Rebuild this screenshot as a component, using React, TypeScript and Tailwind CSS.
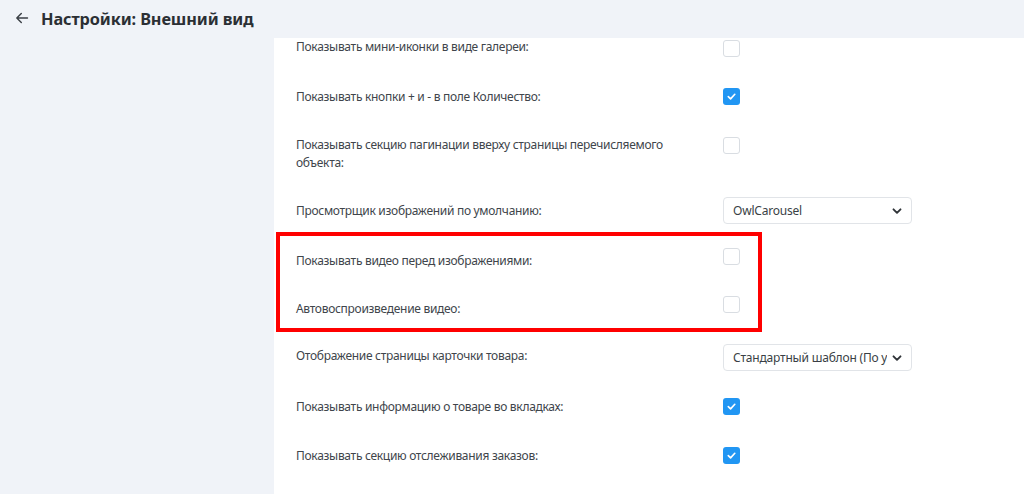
import React from "react";

const font = { fontFamily: '"Noto Sans", "Open Sans", Arial, sans-serif' };

function Check({ checked }: { checked?: boolean }) {
  if (checked) {
    return (
      <div className="w-[17px] h-[17px] rounded-[3px] bg-[#2196f3] flex items-center justify-center">
        <svg width="11" height="11" viewBox="0 0 12 12" fill="none">
          <path d="M2.5 6.2 L5 8.6 L9.6 3.6" stroke="white" strokeWidth="1.8" strokeLinecap="round" strokeLinejoin="round" />
        </svg>
      </div>
    );
  }
  return <div className="w-[17px] h-[17px] rounded-[3px] border border-[#d9dde2] bg-white" />;
}

function Select({ value }: { value: string }) {
  return (
    <div className="w-[189px] h-[27px] rounded-[4px] border border-[#e1e4e8] bg-white flex items-center pl-[9px] pr-[8px]">
      <span className="flex-1 overflow-hidden whitespace-nowrap text-[12px] tracking-[-0.2px] text-[#3a3f45] mr-[4px]">{value}</span>
      <svg width="12" height="12" viewBox="0 0 12 12" fill="none">
        <path d="M2.5 4.3 L6 7.8 L9.5 4.3" stroke="#2f3338" strokeWidth="1.9" strokeLinecap="round" strokeLinejoin="round" />
      </svg>
    </div>
  );
}

function Row({ label, h, cOff, children }: { label: React.ReactNode; h: string; cOff: string; children: React.ReactNode }) {
  return (
    <div className={`flex ${h}`}>
      <div className="w-[400px] text-[12px] tracking-[-0.3px] leading-[18px] text-[#40454b]">{label}</div>
      <div className={`ml-[27px] ${cOff}`}>{children}</div>
    </div>
  );
}

export default function App() {
  return (
    <div className="w-[1024px] h-[494px] bg-[#f0f3f8] overflow-hidden" style={font}>
      <div className="h-[38px] flex items-center pl-[15px]">
        <svg width="14" height="14" viewBox="0 0 14 14" fill="none" className="mr-[12px] mt-[-2px]">
          <path d="M12.5 7 H1.8 M6.3 2.4 L1.8 7 L6.3 11.6" stroke="#3a3f45" strokeWidth="1.4" strokeLinecap="round" strokeLinejoin="round" />
        </svg>
        <h1 className="text-[16.3px] tracking-[-0.1px] font-bold text-[#2b2f34] leading-none mt-[1px]">Настройки: Внешний вид</h1>
      </div>
      <div className="flex h-[456px]">
        <div className="w-[274px] shrink-0" />
        <div className="flex-1 bg-white pl-[22px]">
          <Row label="Показывать мини-иконки в виде галереи:" h="h-[50px]" cOff="mt-[2px]">
            <Check />
          </Row>
          <Row label="Показывать кнопки + и - в поле Количество:" h="h-[48px]" cOff="mt-0">
            <Check checked />
          </Row>
          <Row label="Показывать секцию пагинации вверху страницы перечисляемого объекта:" h="h-[66px]" cOff="mt-[1px]">
            <Check />
          </Row>
          <Row label="Просмотрщик изображений по умолчанию:" h="h-[50px]" cOff="mt-[-5px]">
            <Select value="OwlCarousel" />
          </Row>
          <div className="relative">
            <div className="absolute left-[-20px] top-[-20px] w-[486px] h-[100px] border-4 border-[#ff0000] pointer-events-none" />
            <Row label="Показывать видео перед изображениями:" h="h-[48px]" cOff="mt-[-4px]">
              <Check />
            </Row>
            <Row label="Автовоспроизведение видео:" h="h-[47px]" cOff="mt-[-4px]">
              <Check />
            </Row>
          </div>
          <Row label="Отображение страницы карточки товара:" h="h-[51px]" cOff="mt-[-3px]">
            <Select value="Стандартный шаблон (По умолчанию)" />
          </Row>
          <Row label="Показывать информацию о товаре во вкладках:" h="h-[49px]" cOff="mt-0">
            <Check checked />
          </Row>
          <Row label="Показывать секцию отслеживания заказов:" h="h-[49px]" cOff="mt-0">
            <Check checked />
          </Row>
        </div>
      </div>
    </div>
  );
}
